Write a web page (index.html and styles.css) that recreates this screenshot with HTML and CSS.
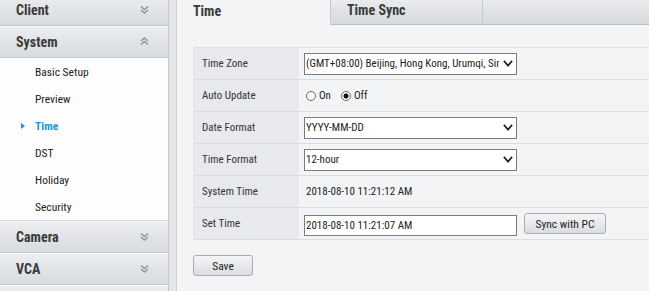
FILE: index.html
```html
<!DOCTYPE html>
<html>
<head>
  <meta charset="utf-8">
  <title>Time Setup</title>
  <link rel="stylesheet" href="styles.css">
</head>
<body>
  <div class="sidebar">
    <div class="menu">
      <div class="menu-head">Client
        <svg class="chev" width="9" height="9" viewBox="0 0 9 9"><path d="M1 1.5 L4.5 4.5 L8 1.5 M1 5 L4.5 8 L8 5"/></svg>
      </div>
      <div class="menu-head">System
        <svg class="chev" width="9" height="9" viewBox="0 0 9 9"><path d="M1 4 L4.5 1 L8 4 M1 7.5 L4.5 4.5 L8 7.5"/></svg>
      </div>
      <ul class="submenu">
        <li>Basic Setup</li>
        <li>Preview</li>
        <li class="active">Time</li>
        <li>DST</li>
        <li>Holiday</li>
        <li>Security</li>
      </ul>
      <div class="menu-head">Camera
        <svg class="chev" width="9" height="9" viewBox="0 0 9 9"><path d="M1 1.5 L4.5 4.5 L8 1.5 M1 5 L4.5 8 L8 5"/></svg>
      </div>
      <div class="menu-head">VCA
        <svg class="chev" width="9" height="9" viewBox="0 0 9 9"><path d="M1 1.5 L4.5 4.5 L8 1.5 M1 5 L4.5 8 L8 5"/></svg>
      </div>
      <div class="menu-head"></div>
    </div>
    <div class="gutter"></div>
  </div>

  <div class="main">
    <div class="tabs">
      <div class="tab active">Time</div>
      <div class="tab">Time Sync</div>
      <div class="tab filler"></div>
    </div>

    <div class="panel">
      <div class="form">
        <div class="form-row">
          <div class="form-label">Time Zone</div>
          <div class="form-value">
            <select class="field">
              <option>(GMT+08:00) Beijing, Hong Kong, Urumqi, Singapore</option>
            </select>
          </div>
        </div>
        <div class="form-row">
          <div class="form-label">Auto Update</div>
          <div class="form-value">
            <label class="radio"><input type="radio" name="auto">On</label>
            <label class="radio"><input type="radio" name="auto" checked>Off</label>
          </div>
        </div>
        <div class="form-row">
          <div class="form-label">Date Format</div>
          <div class="form-value">
            <select class="field"><option>YYYY-MM-DD</option></select>
          </div>
        </div>
        <div class="form-row">
          <div class="form-label">Time Format</div>
          <div class="form-value">
            <select class="field"><option>12-hour</option></select>
          </div>
        </div>
        <div class="form-row">
          <div class="form-label">System Time</div>
          <div class="form-value"><span class="plain">2018-08-10 11:21:12 AM</span></div>
        </div>
        <div class="form-row">
          <div class="form-label">Set Time</div>
          <div class="form-value">
            <input class="field text" type="text" value="2018-08-10 11:21:07 AM">
            <button class="btn sync-btn">Sync with PC</button>
          </div>
        </div>
      </div>

      <button class="btn save-btn">Save</button>
    </div>
  </div>
</body>
</html>
```

FILE: styles.css
```css
body {
  margin: 0;
  padding: 0;
  font-family: "Roboto Condensed", "Liberation Sans", Arial, sans-serif;
  font-size: 11px;
  color: #333;
  background-color: #f3f4f6;
  display: flex;
  height: 291px;
  overflow: hidden;
}

/* Left menu */
.sidebar {
  display: flex;
  flex: none;
}
.menu {
  width: 168px;
  margin-top: -6px;
  background-color: #fdfdfd;
  border-right: 1px solid #c4c8cc;
}
.menu-head {
  height: 31px;
  border-bottom: 1px solid #c4c8cc;
  background: linear-gradient(#eceef0, #d8dbdf);
  box-shadow: inset 0 1px #f7f8f9;
  display: flex;
  align-items: center;
  justify-content: space-between;
  padding: 0 19px 0 16px;
  font-size: 14px;
  font-weight: bold;
  color: #3a3a3a;
}
.chev path {
  fill: none;
  stroke: #8a929c;
  stroke-width: 1.4;
}
.submenu {
  list-style: none;
  margin: 0;
  padding: 0;
  height: 162px;
  border-bottom: 1px solid #d3d6da;
  font-size: 11.5px;
}
.submenu li {
  height: 27px;
  display: flex;
  align-items: center;
  padding-left: 21px;
  color: #222;
}
.submenu li::before {
  content: "";
  width: 0;
  height: 0;
  border-top: 3.5px solid transparent;
  border-bottom: 3.5px solid transparent;
  border-left: 4px solid transparent;
  margin-right: 10px;
}
.submenu li.active {
  color: #1796d3;
  font-weight: bold;
}
.submenu li.active::before {
  border-left-color: #1796d3;
}
.gutter {
  width: 7px;
  background-color: #e5e7ea;
  border-right: 1px solid #cdd0d4;
}

/* Tabs */
.main {
  flex: 1;
  min-width: 0;
}
.tabs {
  display: flex;
  height: 25px;
}
.tab {
  width: 152px;
  height: 25px;
  padding: 0 0 4px 16px;
  box-sizing: border-box;
  display: flex;
  align-items: center;
  font-size: 14px;
  font-weight: bold;
  color: #3a3a3a;
  background: linear-gradient(#e9ebed, #d6d9dd);
  border-left: 1px solid #c6c9cd;
  border-bottom: 1px solid #b9bdc1;
}
.tab.active {
  width: 153px;
  background: none;
  border: none;
}
.tab.filler {
  flex: 1;
}

/* Form */
.panel {
  padding: 22px 0 0 16px;
}
.form {
  border-top: 1px solid #dfe1e4;
  border-left: 1px solid #e2e3e6;
}
.form-row {
  display: grid;
  grid-template-columns: 105px 1fr;
  height: 31px;
  border-bottom: 1px solid #dcdee2;
}
.form-label {
  background-color: #e8e9ec;
  display: flex;
  align-items: center;
  padding-left: 8px;
  color: #333;
}
.form-value {
  display: flex;
  align-items: center;
  padding-left: 5px;
  color: #222;
}
.plain {
  padding-left: 2px;
}
.field {
  width: 213px;
  height: 22px;
  box-sizing: border-box;
  border: 1px solid #7c7c7c;
  border-radius: 0;
  background-color: #fff;
  font-family: inherit;
  font-size: 11px;
  color: #222;
  padding: 0 17px 0 1px;
  margin: 0;
  outline: none;
}
select.field {
  appearance: none;
  -webkit-appearance: none;
  background-image: url("data:image/svg+xml;utf8,<svg xmlns='http://www.w3.org/2000/svg' width='10' height='7' viewBox='0 0 10 7'><path d='M0.9 0.9 L5 5.6 L9.1 0.9' fill='none' stroke='%23222' stroke-width='1.7'/></svg>");
  background-repeat: no-repeat;
  background-position: right 3px center;
}
.field.text {
  height: 21px;
  padding-right: 2px;
  margin-top: 3px;
}
.radio {
  display: flex;
  align-items: center;
  margin-right: 8px;
}
.radio input {
  appearance: none;
  -webkit-appearance: none;
  width: 10px;
  height: 10px;
  margin: 0 3px 0 2px;
  border: 1px solid #666;
  border-radius: 50%;
  background-color: #fff;
}
.radio input:checked {
  background: radial-gradient(circle, #111 0 2.3px, #fff 2.8px);
}

/* Buttons */
.btn {
  height: 21px;
  box-sizing: border-box;
  border: 1px solid #a9adb2;
  border-radius: 3px;
  background: linear-gradient(#f4f5f6, #dadde1);
  font-family: inherit;
  font-size: 11.5px;
  color: #222;
  padding: 0;
  cursor: pointer;
}
.sync-btn {
  width: 82px;
  margin-left: 7px;
}
.save-btn {
  width: 60px;
  margin-top: 15px;
}
```
